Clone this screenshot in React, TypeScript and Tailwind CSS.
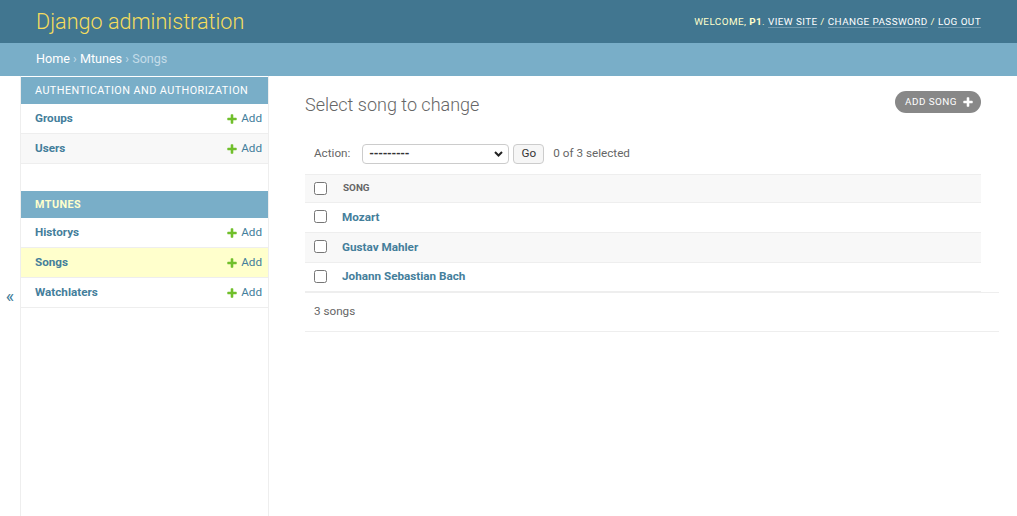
import React from "react";

const PLUS =
  "M1600 796v192q0 40-28 68t-68 28h-416v416q0 40-28 68t-68 28h-192q-40 0-68-28t-28-68v-416h-416q-40 0-68-28t-28-68v-192q0-40 28-68t68-28h416v-416q0-40 28-68t68-28h192q40 0 68 28t28 68v416h416q40 0 68 28t28 68z";

function PlusIcon({ color }: { color: string }) {
  return (
    <svg width="12" height="12" viewBox="0 0 1792 1792" className="shrink-0">
      <path fill={color} d={PLUS} />
    </svg>
  );
}

function SideRow({ label, bg }: { label: string; bg: string }) {
  return (
    <div className={`h-[30px] pt-px border-b border-[#eee] flex items-center justify-between pl-[14px] pr-[6px] ${bg}`}>
      <a className="font-bold text-[#447e9b]">{label}</a>
      <a className="flex items-center gap-[3px] text-[#447e9b]">
        <PlusIcon color="#70bf2b" />
        <span>Add</span>
      </a>
    </div>
  );
}

function Row({ name, bg, h }: { name: string; bg: string; h: string }) {
  return (
    <div className={`${h} ${bg} border-b border-[#eee] flex items-center`}>
      <div className="w-[29px] pl-[9px] flex items-center">
        <input type="checkbox" className="m-0 mb-[2px] w-[13px] h-[13px]" />
      </div>
      <a className="pl-[8px] font-bold text-[#447e9b]">{name}</a>
    </div>
  );
}

export default function App() {
  return (
    <div className="min-h-[516px] bg-white font-[Roboto,sans-serif] text-[11.7px] text-[#333]">
      <header className="h-[43px] bg-[#417690] flex items-center justify-between pl-[36px] pr-[36px]">
        <div className="text-[21.6px] font-light text-[#f5dd5d] leading-[28px]">Django administration</div>
        <div className="pt-px text-[9.9px] uppercase tracking-[0.42px] text-[#ffc]">
          Welcome, <strong className="font-bold">P1</strong>.{" "}
          <a className="text-white border-b border-[rgba(255,255,255,0.25)]">View site</a> /{" "}
          <a className="text-white border-b border-[rgba(255,255,255,0.25)]">Change password</a> /{" "}
          <a className="text-white border-b border-[rgba(255,255,255,0.25)]">Log out</a>
        </div>
      </header>
      <div className="h-[33px] bg-[#79aec8] flex items-center pl-[36px] text-[12.6px] text-[#c4dce8] whitespace-pre">
        <a className="text-white">Home</a>
        <span> › </span>
        <a className="text-white">Mtunes</a>
        <span> › </span>
        <span>Songs</span>
      </div>
      <div className="flex h-[440px]">
        <div className="w-[21px] shrink-0 border-r border-[#eee] flex items-center justify-center text-[18px] text-[#447e9b] leading-none">
          «
        </div>
        <nav className="w-[248px] shrink-0 border-r border-[#eee] pt-px">
          <div className="mb-[27px]">
            <div className="h-[27px] pt-px bg-[#79aec8] flex items-center pl-[14px] text-[10.8px] uppercase tracking-[0.45px] text-white">
              Authentication and Authorization
            </div>
            <SideRow label="Groups" bg="bg-white" />
            <SideRow label="Users" bg="bg-[#f8f8f8]" />
          </div>
          <div>
            <div className="h-[27px] pt-px bg-[#79aec8] flex items-center pl-[14px] text-[10.8px] uppercase tracking-[0.45px] font-bold text-[#ffc]">
              Mtunes
            </div>
            <SideRow label="Historys" bg="bg-white" />
            <SideRow label="Songs" bg="bg-[#ffc]" />
            <SideRow label="Watchlaters" bg="bg-white" />
          </div>
        </nav>
        <main className="flex-1 pl-[36px] pr-[36px] pt-[15px]">
          <div className="flex justify-between items-start">
            <h1 className="mt-[3px] text-[18px] leading-[22px] font-light text-[#666]">Select song to change</h1>
            <a className="h-[22px] rounded-full bg-[#888] pl-[10px] pr-[7px] flex items-center gap-[5px] text-[9.9px] uppercase tracking-[0.45px] text-white">
              <span>Add song</span>
              <PlusIcon color="#fff" />
            </a>
          </div>
          <div className="mt-[18px] h-[40px] flex items-center pl-[9px] text-[#666]">
            <span>Action:</span>
            <div className="ml-[12px] w-[147px] h-[20px] border border-[#ccc] rounded-[4px] flex items-center justify-between pl-[6px] pr-[5px] text-[#333]">
              <span className="text-[12px] font-bold tracking-[-0.3px]">---------</span>
              <svg width="9" height="6" viewBox="0 0 9 6">
                <path d="M1 1l3.5 3.5L8 1" stroke="#222" strokeWidth="2" fill="none" />
              </svg>
            </div>
            <button className="ml-[4px] h-[20px] w-[31px] border border-[#ccc] rounded-[4px] bg-[#f6f6f6] text-[11.7px] text-[#333] flex items-center justify-center">
              Go
            </button>
            <span className="ml-[9px]">0 of 3 selected</span>
          </div>
          <div className="border-t border-b border-[#eee] h-[29px] bg-[#f8f8f8] flex items-center">
            <div className="w-[29px] pl-[9px] flex items-center">
              <input type="checkbox" className="m-0 w-[13px] h-[13px]" />
            </div>
            <span className="pl-[9px] text-[9.9px] font-bold uppercase text-[#666]">Song</span>
          </div>
          <Row name="Mozart" bg="bg-white" h="h-[30px]" />
          <Row name="Gustav Mahler" bg="bg-[#f8f8f8]" h="h-[30px]" />
          <Row name="Johann Sebastian Bach" bg="bg-white" h="h-[29px]" />
          <div className="-mr-[18px] h-[40px] border-t border-b border-[#eee] flex items-center pl-[9px] text-[#666]">
            3 songs
          </div>
        </main>
      </div>
    </div>
  );
}
